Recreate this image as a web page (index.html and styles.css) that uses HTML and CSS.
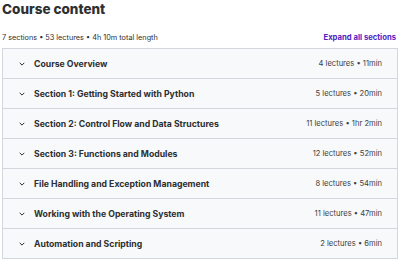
FILE: index.html
```html
<!DOCTYPE html>
<html>
<head>
    <title>Course content</title>
    <link rel="stylesheet" href="styles.css">
</head>
<body>
    <h2 class="title">Course content</h2>

    <div class="summary">
        <span>7 sections • 53 lectures • 4h 10m total length</span>
        <span class="expand">Expand all sections</span>
    </div>

    <div class="sections">
        <div class="section">
            <span class="chevron"><svg width="6" height="4" viewBox="0 0 6 4"><path d="M0.7 0.8 L3 3.1 L5.3 0.8" fill="none" stroke="#2d2f31" stroke-width="1"/></svg></span>
            <span class="section-title">Course Overview</span>
            <span class="section-meta">4 lectures • 11min</span>
        </div>
        <div class="section">
            <span class="chevron"><svg width="6" height="4" viewBox="0 0 6 4"><path d="M0.7 0.8 L3 3.1 L5.3 0.8" fill="none" stroke="#2d2f31" stroke-width="1"/></svg></span>
            <span class="section-title">Section 1: Getting Started with Python</span>
            <span class="section-meta">5 lectures • 20min</span>
        </div>
        <div class="section">
            <span class="chevron"><svg width="6" height="4" viewBox="0 0 6 4"><path d="M0.7 0.8 L3 3.1 L5.3 0.8" fill="none" stroke="#2d2f31" stroke-width="1"/></svg></span>
            <span class="section-title">Section 2: Control Flow and Data Structures</span>
            <span class="section-meta">11 lectures • 1hr 2min</span>
        </div>
        <div class="section">
            <span class="chevron"><svg width="6" height="4" viewBox="0 0 6 4"><path d="M0.7 0.8 L3 3.1 L5.3 0.8" fill="none" stroke="#2d2f31" stroke-width="1"/></svg></span>
            <span class="section-title">Section 3: Functions and Modules</span>
            <span class="section-meta">12 lectures • 52min</span>
        </div>
        <div class="section">
            <span class="chevron"><svg width="6" height="4" viewBox="0 0 6 4"><path d="M0.7 0.8 L3 3.1 L5.3 0.8" fill="none" stroke="#2d2f31" stroke-width="1"/></svg></span>
            <span class="section-title">File Handling and Exception Management</span>
            <span class="section-meta">8 lectures • 54min</span>
        </div>
        <div class="section">
            <span class="chevron"><svg width="6" height="4" viewBox="0 0 6 4"><path d="M0.7 0.8 L3 3.1 L5.3 0.8" fill="none" stroke="#2d2f31" stroke-width="1"/></svg></span>
            <span class="section-title">Working with the Operating System</span>
            <span class="section-meta">11 lectures • 47min</span>
        </div>
        <div class="section">
            <span class="chevron"><svg width="6" height="4" viewBox="0 0 6 4"><path d="M0.7 0.8 L3 3.1 L5.3 0.8" fill="none" stroke="#2d2f31" stroke-width="1"/></svg></span>
            <span class="section-title">Automation and Scripting</span>
            <span class="section-meta">2 lectures • 6min</span>
        </div>
    </div>
</body>
</html>
```

FILE: styles.css
```css
body {
    margin: 0;
    padding: 0 2px;
    font-family: Inter, "Noto Sans", sans-serif;
    color: #2d2f31;
    background-color: white;
}

.title {
    font-size: 13.5px;
    font-weight: 800;
    line-height: 18px;
    margin: 0;
}

.summary {
    display: flex;
    justify-content: space-between;
    align-items: center;
    font-size: 7.3px;
    height: 14px;
    margin-top: 12px;
    margin-bottom: 4px;
}

.expand {
    color: #5022c3;
    font-weight: 700;
    font-size: 7.7px;
    padding-right: 2px;
}

.sections {
    border: 1px solid #d1d7dc;
}

.section {
    display: flex;
    align-items: center;
    height: 29px;
    padding: 0 15px 0 16px;
    background-color: #f7f9fa;
    border-bottom: 1px solid #d1d7dc;
    font-size: 8.7px;
}

.section:last-child {
    border-bottom: none;
}

.chevron {
    display: flex;
    width: 6px;
    margin-right: 9px;
}

.section-title {
    flex: 1;
    font-weight: 700;
}

.section-meta {
    font-size: 7.6px;
    color: #3e4143;
}
```
